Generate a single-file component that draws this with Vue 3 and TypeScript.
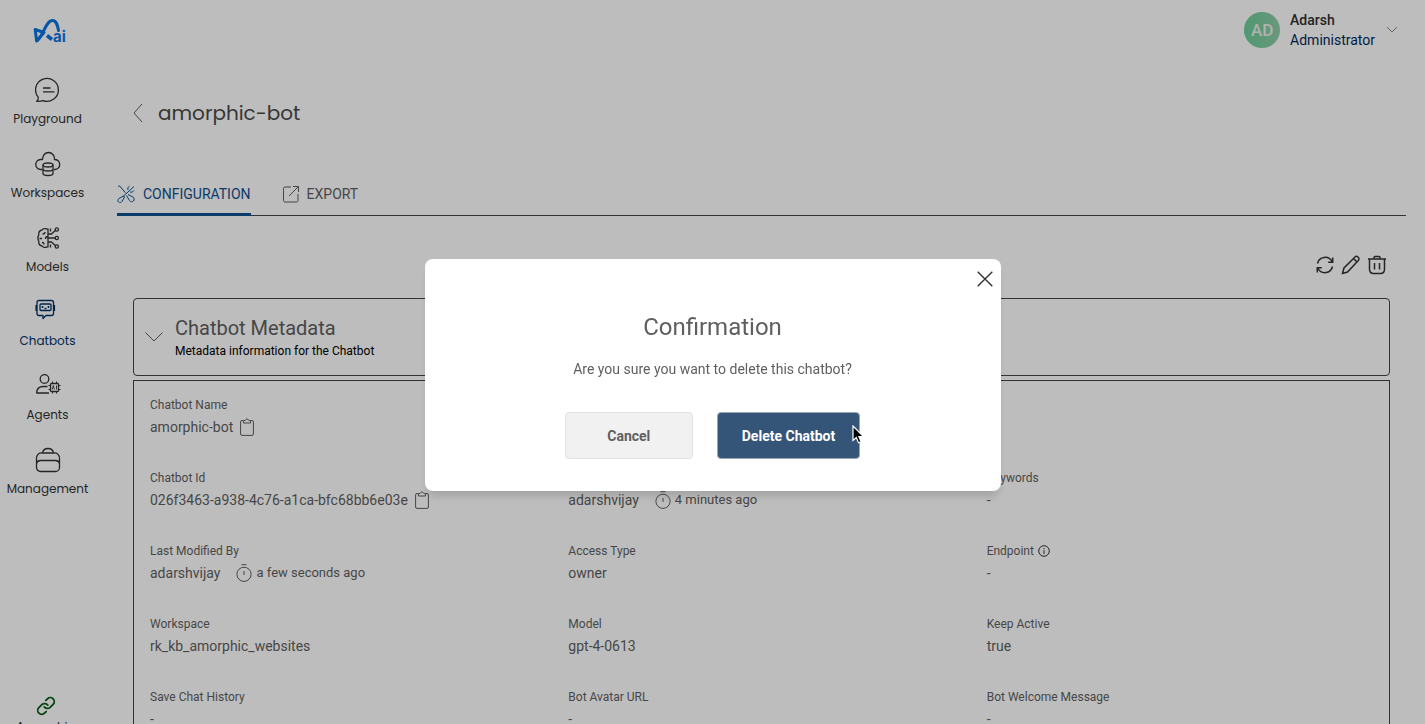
<script setup lang="ts">
import { ref } from 'vue'

interface NavItem {
  id: string
  label: string
}

interface Field {
  label: string
  value: string
  copy?: boolean
  time?: string
  info?: boolean
  wide?: boolean
}

const navItems: NavItem[] = [
  { id: 'playground', label: 'Playground' },
  { id: 'workspaces', label: 'Workspaces' },
  { id: 'models', label: 'Models' },
  { id: 'chatbots', label: 'Chatbots' },
  { id: 'agents', label: 'Agents' },
  { id: 'management', label: 'Management' },
]

const fields: Field[] = [
  { label: 'Chatbot Name', value: 'amorphic-bot', copy: true, wide: true },
  { label: 'Chatbot Id', value: '026f3463-a938-4c76-a1ca-bfc68bb6e03e', copy: true },
  { label: 'Created By', value: 'adarshvijay', time: '4 minutes ago' },
  { label: 'Keywords', value: '-' },
  { label: 'Last Modified By', value: 'adarshvijay', time: 'a few seconds ago' },
  { label: 'Access Type', value: 'owner' },
  { label: 'Endpoint', value: '-', info: true },
  { label: 'Workspace', value: 'rk_kb_amorphic_websites' },
  { label: 'Model', value: 'gpt-4-0613' },
  { label: 'Keep Active', value: 'true' },
  { label: 'Save Chat History', value: '-' },
  { label: 'Bot Avatar URL', value: '-' },
  { label: 'Bot Welcome Message', value: '-' },
]

const active = ref('chatbots')
const open = ref(true)
const expanded = ref(true)
</script>

<template>
  <div class="app">
    <aside class="sidebar">
      <a class="logo" href="#" aria-label="Home">
        <svg width="34" height="26" viewBox="0 0 34 26">
          <path d="M2.200 11.500L3.600 23 11 14.500z" fill="none" stroke="#0b76e0" stroke-width="3" stroke-linejoin="round" />
          <path d="M4.500 22.500C10.500 17 13 2.500 19.500 2.500c4 0 5 4.500 6 10" fill="none" stroke="#0b76e0" stroke-width="3" stroke-linecap="round" />
          <path d="M14 17.500l5 4" stroke="#0b76e0" stroke-width="3.600" />
          <text x="20" y="24" class="logo-text">ai</text>
        </svg>
      </a>
      <nav class="nav">
        <a
          v-for="item in navItems"
          :key="item.id"
          href="#"
          class="nav-item"
          :class="{ active: item.id === active }"
          @click.prevent="active = item.id"
        >
          <svg class="nav-icon" width="26" height="26" viewBox="0 0 26 26">
            <template v-if="item.id === 'playground'">
              <path d="M1.700 24.300c1.200-1 1.700-2.200 1.600-4A11.400 11.400 0 1 1 8 23.600c-2 .7-4 .8-6.300.7z" />
              <path d="M8 11h7.500M8 14.800h11.500" />
            </template>
            <template v-else-if="item.id === 'workspaces'">
              <path d="M7.500 18.500H6a5 5 0 0 1-.5-10h2C7.500 4.500 10 1.500 13.500 1.500s6.300 3 6 7a5 5 0 0 1 .5 10h-1" />
              <ellipse cx="13" cy="14" rx="5" ry="2" />
              <path d="M8 14v8.500c0 1.200 2 2 5 2s5-.8 5-2V14M8 18c0 1.200 2 2 5 2s5-.8 5-2" />
            </template>
            <template v-else-if="item.id === 'models'">
              <path d="M13 3.500v19M13 4.500C11 3 8 3.500 7 5 4.500 5.500 3.500 7 3.800 9.500c-1 2-1 5 0 7C3.500 19 4.500 20.500 7 21c1 1.500 4 2 6 .5" />
              <path d="M7.500 9q2.500 0 2.500-2M4.500 13.500H7M13 11.500q-2.500 0-2.500 2.500M7 17.500q2 0 2 2" />
              <path d="M13 9h3.500l3.800-3.500M13 13h7M13 17h3.500l3.800 3.500M15.500 3.500v3M15.500 19.500v3" />
              <circle cx="21.800" cy="4.500" r="1.600" /><circle cx="21.800" cy="13" r="1.600" /><circle cx="21.800" cy="21.500" r="1.600" />
            </template>
            <template v-else-if="item.id === 'chatbots'">
              <path d="M4 1.500h12.500q2 0 2 2v11q0 2-2 2h-5.500L8 19.500v-3H4q-2 0-2-2v-11q0-2 2-2z" />
              <rect x="5" y="5" width="11" height="6.500" rx="1" />
              <path d="M1.200 6v6M19.300 6v6" stroke-width="1.600" />
              <path d="M7.500 7v2M13.500 7v2M9.500 9.500h2" stroke-width="1.600" />
            </template>
            <template v-else-if="item.id === 'agents'">
              <circle cx="9.500" cy="6" r="4.300" />
              <path d="M14 20H1.700c0-4.500 3-6.500 6.800-6.500h4" />
              <rect x="15.500" y="10.500" width="8" height="8" rx="1" />
              <path d="M17.500 8.500v2M21.500 8.500v2M17.500 18.500v2M21.500 18.500v2M13.500 12.500h2M13.500 16.500h2M23.500 12.500h2M23.500 16.500h2" stroke-width="1" />
              <path d="M17.200 16.500l1.100-4 1.100 4M21.500 12.500v4" stroke-width=".9" />
            </template>
            <template v-else>
              <path d="M7.500 6c.5-3 2-4.500 5.500-4.500s5 1.500 5.500 4.500" />
              <path d="M7 6h12a5 5 0 0 1 5.500 5v9.500a4 4 0 0 1-4 4h-15a4 4 0 0 1-4-4V11A5 5 0 0 1 7 6zM1.500 16.500c.5-2 2-3 4-3h15c2 0 3.500 1 4 3" />
            </template>
          </svg>
          <span>{{ item.label }}</span>
        </a>
      </nav>
      <a class="nav-item link-item" href="#">
        <svg class="link-icon" width="20" height="20" viewBox="1 1 22 22">
          <path d="M10 13a4.500 4.500 0 0 0 6.600.5l3.200-3.200a4.300 4.300 0 0 0-6.200-6.200l-1.800 1.800" />
          <path d="M14 11a4.500 4.500 0 0 0-6.600-.5l-3.200 3.200a4.300 4.300 0 0 0 6.200 6.200l1.800-1.800" />
        </svg>
        <span>Amorphic</span>
      </a>
    </aside>

    <div class="page">
      <header class="topbar">
        <button class="user" type="button">
          <span class="avatar">AD</span>
          <span class="user-text">
            <span class="user-name">Adarsh</span>
            <span class="user-role">Administrator</span>
          </span>
          <svg class="user-caret" width="12" height="8" viewBox="0 0 12 8"><path d="M1 1l5 5 5-5" /></svg>
        </button>
      </header>

      <main class="main">
        <div class="title-row">
          <button class="back" type="button" aria-label="Back">
            <svg width="12" height="20" viewBox="0 0 12 20"><path d="M10 1L2 10l8 9" /></svg>
          </button>
          <h1>amorphic-bot</h1>
        </div>

        <div class="tabs" role="tablist">
          <button class="tab selected" type="button" role="tab" aria-selected="true">
            <svg width="18" height="18" viewBox="0 0 18 18">
              <path d="M1 1.500l1.500-.7 6 7M17 1.500L6 11.500M12.500 1c-1.500 1-2 2.500-1.500 4M17 5.500c-1 1.500-2.500 2-4 1.500M9.500 10.500l3 5c1 1.500 3 1.700 4 .5s.8-3-.5-4l-5-2.500" />
              <path d="M6.500 11L2 13.500c-1.500 1-1.500 2.500-.5 3.500s2.500 1 3.500-.5L7.500 12zM3 15.300h.2" />
            </svg>
            <span>CONFIGURATION</span>
          </button>
          <button class="tab" type="button" role="tab" aria-selected="false">
            <svg width="18" height="18" viewBox="0 0 18 18">
              <path d="M9 2H3q-1.500 0-1.500 1.500v12Q1.500 17 3 17h11.500q1.500 0 1.500-1.500V9M11 1.500h5.500V7M16.500 1.500L7 11" />
            </svg>
            <span>EXPORT</span>
          </button>
        </div>

        <section class="panel">
          <div class="actions">
            <button type="button" aria-label="Refresh">
              <svg width="20" height="20" viewBox="0 0 20 20">
                <path d="M2.500 8.500a7.800 7.800 0 0 1 14.500-2M17.500 11.500a7.800 7.800 0 0 1-14.500 2M17.700 2.500v4.800h-4.500M2.300 17.500v-4.800h4.500" />
              </svg>
            </button>
            <button type="button" aria-label="Edit">
              <svg width="20" height="20" viewBox="0 0 20 20">
                <path d="M1.500 18.500l1.500-5.500L14 2q1.500-1.500 3.200.2.800.8.800 1.800 0 .8-.7 1.500L6.500 17zM12.500 3.500l4 4" />
              </svg>
            </button>
            <button type="button" aria-label="Delete">
              <svg width="20" height="20" viewBox="0 0 20 20">
                <path d="M1 4h18M7 4V2.500Q7 1.500 8 1.500h4q1 0 1 1V4M2.500 4v10q0 4.500 4 4.500h7q4 0 4-4.500V4M7.500 8v6.500M12.500 8v6.500" />
              </svg>
            </button>
          </div>

          <button class="card-head" type="button" :aria-expanded="expanded" @click="expanded = !expanded">
            <svg width="18" height="10" viewBox="0 0 18 10"><path d="M.5.500L9 9 17.500.500" /></svg>
            <span class="card-text">
              <span class="card-title">Chatbot Metadata</span>
              <span class="card-sub">Metadata information for the Chatbot</span>
            </span>
          </button>

          <dl v-if="expanded" class="grid">
            <div v-for="f in fields" :key="f.label" class="field" :class="{ wide: f.wide }">
              <dt>
                <span>{{ f.label }}</span>
                <svg v-if="f.info" class="info" width="12" height="12" viewBox="0 0 12 12">
                  <circle cx="6" cy="6" r="5.300" /><path d="M6 5.200V9M6 3v1.200" />
                </svg>
              </dt>
              <dd>
                <span>{{ f.value }}</span>
                <button v-if="f.copy" class="copy" type="button" aria-label="Copy">
                  <svg width="14" height="18" viewBox="0 0 14 18">
                    <path d="M3.500 2.500H2Q.6 2.500.6 4v12Q.6 17.400 2 17.400h10q1.400 0 1.400-1.400V4Q13.400 2.500 12 2.500h-1.500M3.500 5V2.800L5.500 2 7 .7 8.500 2l2 .8V5z" />
                  </svg>
                </button>
                <span v-if="f.time" class="time">
                  <svg width="16" height="18" viewBox="0 0 16 18">
                    <circle cx="8" cy="10.300" r="7.100" /><path d="M5.500.700h5M8 7v4" />
                  </svg>
                  <span>{{ f.time }}</span>
                </span>
              </dd>
            </div>
          </dl>
        </section>
      </main>
    </div>

    <div v-if="open" class="overlay">
      <div class="modal" role="dialog" aria-modal="true" aria-labelledby="confirm-title">
        <button class="close" type="button" aria-label="Close" @click="open = false">
          <svg width="16" height="16" viewBox="0 0 16 16"><path d="M.7.700l14.600 14.600M15.300.700L.7 15.300" /></svg>
        </button>
        <h2 id="confirm-title">Confirmation</h2>
        <p>Are you sure you want to delete this chatbot?</p>
        <div class="buttons">
          <button class="btn cancel" type="button" @click="open = false">Cancel</button>
          <button class="btn danger" type="button">
            Delete Chatbot
            <svg class="pointer" width="13" height="19" viewBox="0 0 13 19">
              <path d="M1 1v14.500l3.300-3 2.200 5.300 2.600-1.100-2.200-5.200h4.600z" />
            </svg>
          </button>
        </div>
      </div>
    </div>
  </div>
</template>

<style>
body {
  margin: 0;
  background: #fff;
}
</style>

<style scoped>
.app {
  display: flex;
  height: 100vh;
  overflow: hidden;
  font-family: Roboto, 'Liberation Sans', sans-serif;
  font-size: 14px;
  line-height: 20px;
  color: #5f5f5f;
}
button {
  font: inherit;
  color: inherit;
  background: none;
  border: 0;
  padding: 0;
  cursor: pointer;
}
a {
  text-decoration: none;
}
svg {
  display: block;
  flex: none;
  fill: none;
  stroke: currentColor;
}
.sidebar {
  display: flex;
  flex-direction: column;
  flex: none;
  width: 95px;
  overflow: hidden;
}
.logo {
  align-self: center;
  margin: 18px 0 33px 4px;
}
.logo svg {
  overflow: visible;
}
.logo-text {
  font: 700 15px Inter, sans-serif;
  fill: #0b76e0;
  stroke: none;
}
.nav {
  display: flex;
  flex-direction: column;
  gap: 22px;
}
.nav-item {
  display: flex;
  flex-direction: column;
  align-items: center;
  gap: 6px;
  font-family: Poppins, Inter, sans-serif;
  font-size: 12px;
  color: #333;
}
.nav-item.active {
  color: #003268;
}
.nav-icon {
  stroke-width: 1.3;
  stroke-linejoin: round;
}
.link-item {
  gap: 1px;
  margin: auto 4px -13px 0;
}
.link-icon {
  color: #075c17;
  stroke-width: 2;
  stroke-linecap: round;
}
.page {
  flex: 1;
  min-width: 0;
  padding: 0 19px 0 22px;
}
.topbar {
  display: flex;
  justify-content: flex-end;
  padding: 10px 8px 0 0;
}
.user {
  display: flex;
  align-items: center;
  text-align: left;
}
.avatar {
  display: grid;
  place-items: center;
  width: 36px;
  height: 36px;
  margin-right: 10px;
  border-radius: 50%;
  background: linear-gradient(90deg, #6bcf98, #8fcda9);
  color: #eee;
  font-size: 17px;
  font-weight: 500;
}
.user-text {
  display: flex;
  flex-direction: column;
}
.user-name {
  font-weight: 500;
  color: #303030;
}
.user-role {
  color: #002b5c;
}
.user-caret {
  margin-left: 11px;
  color: #8a8a8a;
}
.title-row {
  display: flex;
  align-items: center;
  gap: 14px;
  height: 30px;
  margin: 48px 0 0 15px;
}
h1 {
  margin: 0;
  font: 400 20px/30px Poppins, Inter, sans-serif;
  color: #4a4a4a;
}
.tabs {
  display: flex;
  gap: 31px;
  margin-top: 47px;
  border-bottom: 1px solid #444;
}
.tab {
  display: flex;
  align-items: center;
  gap: 7px;
  height: 41px;
  border-bottom: 3px solid transparent;
  margin-bottom: -1px;
  box-sizing: border-box;
}
.tab.selected {
  gap: 8px;
  color: #0f5090;
  border-color: #0f5090;
}
.panel {
  padding: 0 16px;
}
.actions {
  display: flex;
  justify-content: flex-end;
  gap: 6px;
  padding: 39px 3px 23px 0;
  color: #333;
}
.actions svg {
  stroke-width: 1.5;
}
.card-head {
  display: flex;
  align-items: center;
  gap: 12px;
  width: 100%;
  height: 78px;
  padding: 0 11px;
  border: 1px solid #444;
  border-radius: 4px;
  text-align: left;
}
.card-text {
  display: flex;
  flex-direction: column;
  padding-top: 3px;
}
.card-title {
  font-size: 20px;
  line-height: 25px;
}
.card-sub {
  font-size: 12px;
  color: #000;
}
.grid {
  display: grid;
  grid-template-columns: repeat(3, 1fr);
  row-gap: 30px;
  margin: 4px 0 0;
  padding: 14px 0;
  border: 1px solid #444;
}
.field {
  padding: 0 16px;
}
.wide {
  grid-column: 1 / -1;
}
dt {
  display: flex;
  align-items: center;
  gap: 4px;
  font-size: 12px;
}
dd {
  display: flex;
  align-items: center;
  margin: 0;
  height: 23px;
}
.info {
  color: #333;
}
.copy {
  margin-left: 7px;
}
.time {
  display: flex;
  align-items: center;
  gap: 4px;
  margin-left: 16px;
  font-size: 13px;
}
.overlay {
  position: fixed;
  inset: 0;
  display: grid;
  place-items: center;
  padding-top: 26px;
  background: rgba(0, 0, 0, 0.26);
}
.modal {
  position: relative;
  box-sizing: border-box;
  width: 576px;
  max-width: 90vw;
  padding: 52px 24px 32px;
  border-radius: 8px;
  background: #fff;
  box-shadow: 0 8px 10px -3px rgba(0, 0, 0, 0.15);
  text-align: center;
}
.close {
  position: absolute;
  top: 12px;
  right: 8px;
  color: #333;
}
.close svg {
  stroke-width: 1.4;
}
h2 {
  margin: 0;
  font-size: 24px;
  font-weight: 400;
  line-height: 32px;
}
p {
  margin: 16px 0 33px;
}
.buttons {
  display: flex;
  justify-content: center;
  gap: 24px;
}
.btn {
  position: relative;
  min-width: 128px;
  height: 47px;
  padding: 0 24px;
  border: 1px solid #e2e2e2;
  border-radius: 4px;
  font-weight: 700;
}
.cancel {
  background: #f1f1f1;
}
.danger {
  border-color: #9aa5b2;
  background: #355578;
  color: #fff;
}
.pointer {
  position: absolute;
  right: -6px;
  top: 12px;
  fill: #000;
  stroke: #fff;
  stroke-width: 1.2;
}
</style>
